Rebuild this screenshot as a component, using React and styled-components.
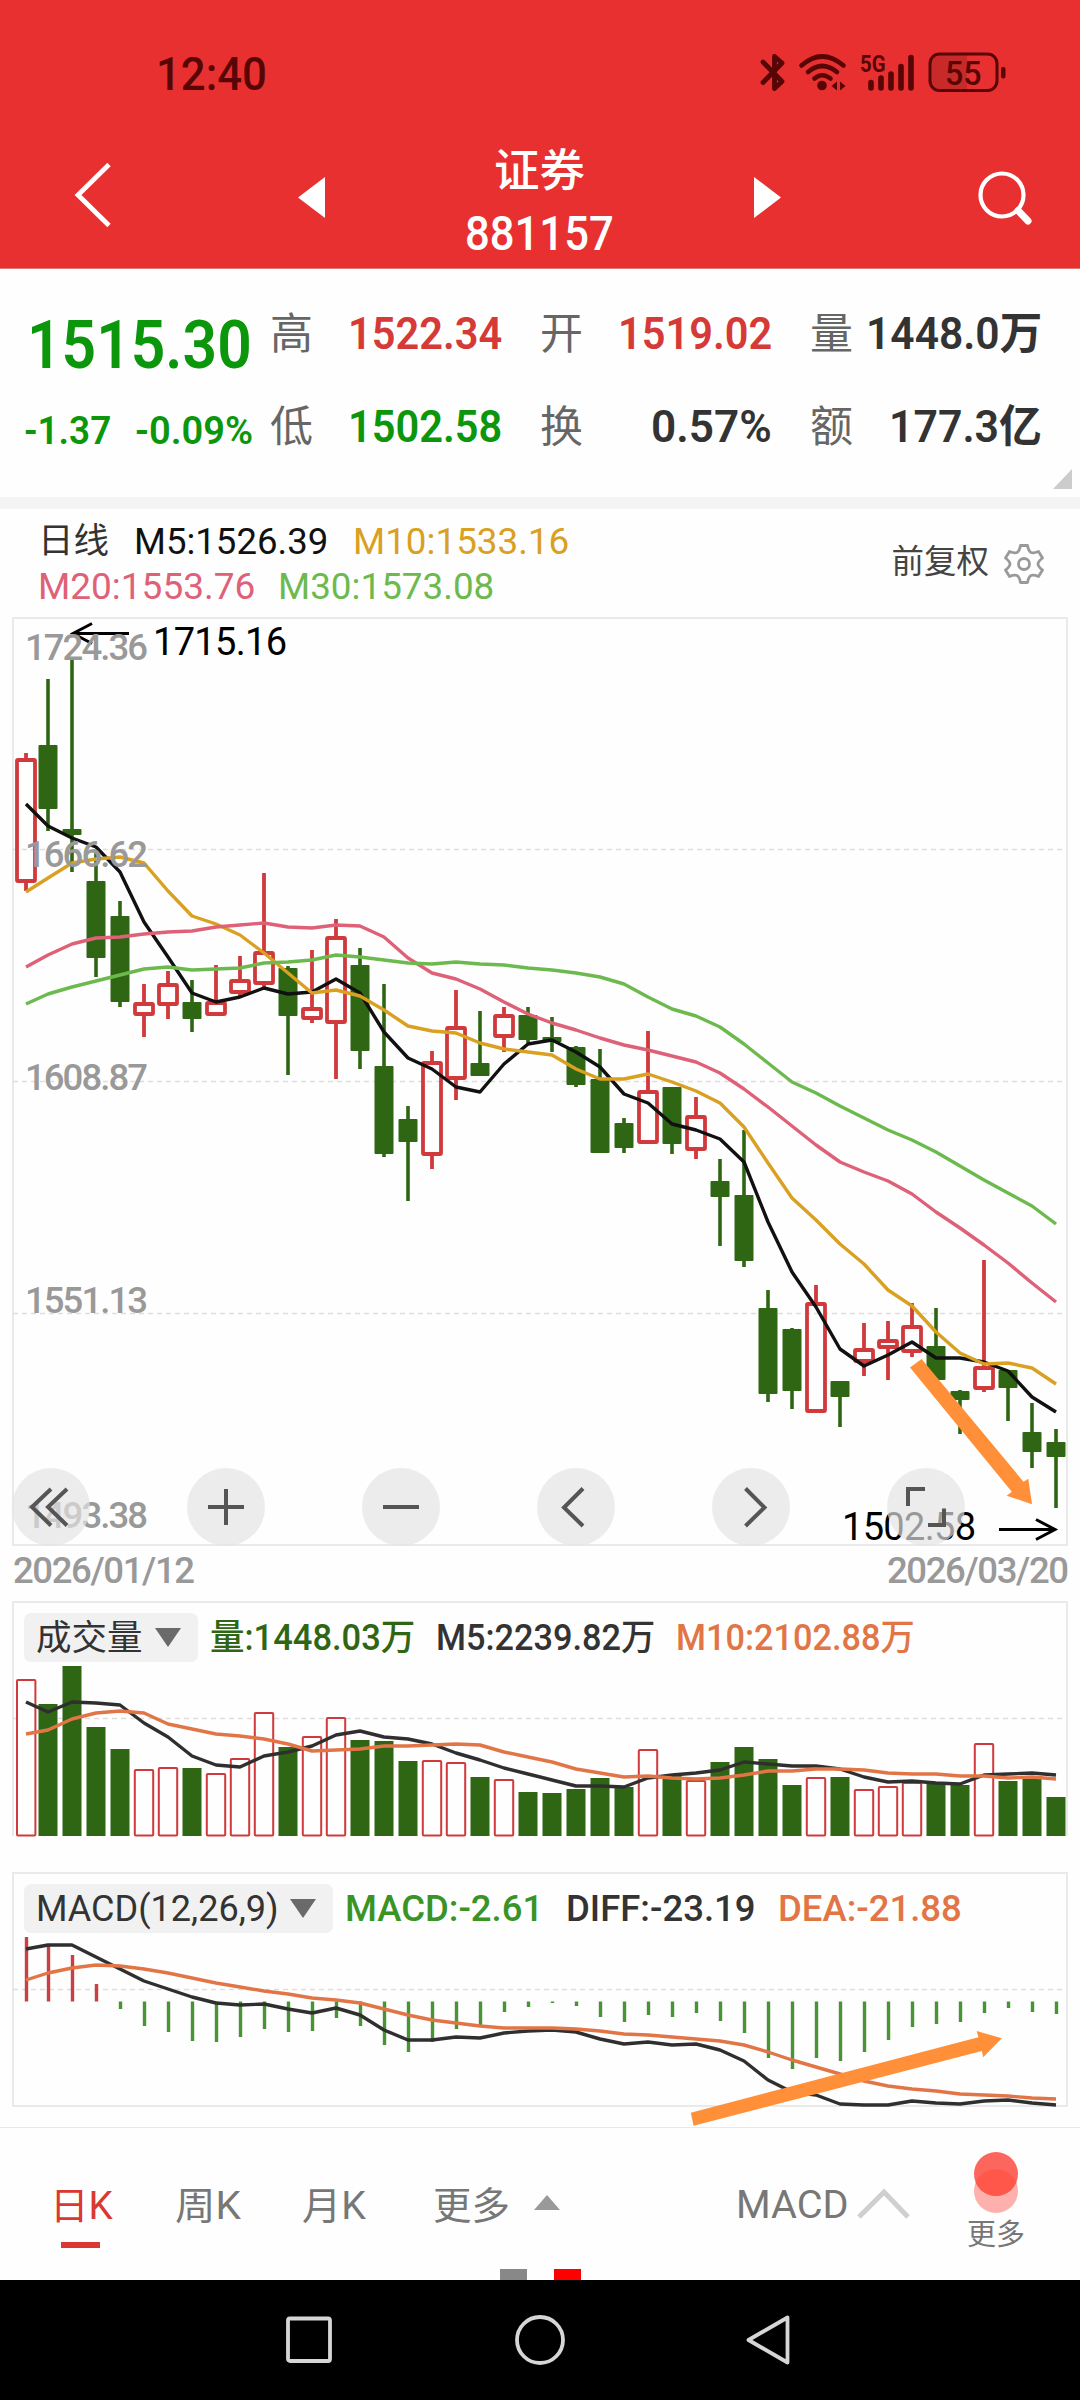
import React, { useLayoutEffect, useRef } from "react";
import styled, { createGlobalStyle, css } from "styled-components";

const FONT = `Roboto, "Noto Sans CJK SC", sans-serif`;

const GlobalStyle = createGlobalStyle`
  * { box-sizing: border-box; }
  body { margin: 0; background: #fefefe; font-family: ${FONT}; }
  svg { display: block; }
`;

/* ---------- text fitted to a column width ---------- */
const FitBox = styled.span`
  display: block;
  flex: none;
  width: ${(p) => p.$w}px;
  white-space: nowrap;
  font-size: ${(p) => p.$size}px;
  font-weight: ${(p) => p.$weight || 400};
  color: ${(p) => p.$color || "inherit"};
  margin-left: ${(p) => p.$gap || 0}px;
`;
const FitInner = styled.span`
  display: inline-block;
  transform-origin: 0 50%;
`;
function Fit({ w, size, weight, color, gap, children }) {
  const ref = useRef(null);
  useLayoutEffect(() => {
    const fit = () => {
      const el = ref.current;
      if (el) el.style.transform = `scaleX(${w / el.offsetWidth})`;
    };
    fit();
    document.fonts?.ready.then(fit);
  }, [w, children]);
  return (
    <FitBox $w={w} $size={size} $weight={weight} $color={color} $gap={gap}>
      <FitInner ref={ref}>{children}</FitInner>
    </FitBox>
  );
}

/* ---------- layout ---------- */
const Screen = styled.main`
  width: 1080px;
  height: 2400px;
  overflow: hidden;
  display: flex;
  flex-direction: column;
  background: #fefefe;
`;
const Header = styled.header`
  height: 269px;
  background: #e83030;
  border-bottom: 1px solid #e07a76;
`;
const StatusBar = styled.div`
  height: 141px;
  padding: 7px 60px 0 156px;
  display: flex;
  align-items: center;
  justify-content: space-between;
  color: #570505;
`;
const TitleBar = styled.div`
  height: 124px;
  display: grid;
  grid-template-columns: 298px 27px 429px 27px 1fr;
  align-items: center;
  color: #fff;
`;
const TitleText = styled.div`
  display: flex;
  flex-direction: column;
  align-items: center;
  line-height: 62px;
`;
const BackSlot = styled.div`
  padding: 0 0 16px 70px;
`;
const SearchSlot = styled.div`
  padding: 0 0 12px 195px;
`;
const StepSlot = styled.div`
  padding-bottom: 12px;
`;

const Quote = styled.section`
  height: 228px;
  display: flex;
  position: relative;
`;
const Price = styled.div`
  width: 270px;
  padding: 33px 0 0 24px;
  line-height: 86px;
  color: #0b960b;
`;
const PriceRow = styled.div`
  padding-left: 3px;
`;
const ChangeRow = styled.div`
  display: flex;
`;
const Stats = styled.div`
  display: grid;
  grid-template-columns: repeat(3, 232px);
  grid-auto-rows: 93px;
  column-gap: 38px;
  padding-top: 19px;
  line-height: 93px;
`;
const Stat = styled.div`
  display: flex;
  justify-content: space-between;
`;
const StatLabel = styled.span`
  font-size: 43px;
  color: #666;
`;
const Corner = styled.i`
  position: absolute;
  right: 8px;
  bottom: 8px;
  border-style: solid;
  border-width: 0 0 20px 19px;
  border-color: transparent transparent #ccc transparent;
`;
const Band = styled.div`
  height: 12px;
  background: #f4f4f4;
`;

const Legend = styled.section`
  height: 100px;
  padding: 10px 35px 0 38px;
  display: flex;
  justify-content: space-between;
`;
const LegendRow = styled.div`
  display: flex;
  line-height: 45px;
  height: 45px;
`;
const Adjust = styled.div`
  height: 90px;
  display: flex;
  align-items: center;
  gap: 14px;
  font-size: 32.5px;
  line-height: 40px;
  color: #444;
`;
const AdjustText = styled.span`
  padding-bottom: 4px;
`;

const ChartBox = styled.section`
  position: relative;
  height: ${(p) => p.$h}px;
`;
const Canvas = styled.svg`
  position: absolute;
  inset: 0;
  overflow: visible;
`;
const Controls = styled.div`
  position: absolute;
  left: 12px;
  top: 859px;
  display: flex;
  gap: 97px;
`;
const RoundButton = styled.button`
  width: 78px;
  height: 78px;
  padding: 0;
  border: 0;
  border-radius: 50%;
  background: rgba(227, 227, 227, 0.675);
`;
const IndicatorBar = styled.div`
  position: relative;
  display: flex;
  padding: ${(p) => p.$top}px 0 0 24px;
  line-height: 50px;
`;
const Pill = styled.div`
  width: ${(p) => p.$w}px;
  height: 49px;
  border-radius: 7px;
  background: #f1f1f1;
  color: #333;
  display: flex;
  align-items: center;
  padding-left: 12px;
  gap: 12px;
`;
const Caret = styled.i`
  border-style: solid;
  border-color: ${(p) => p.$color} transparent;
  border-width: ${(p) => (p.$up ? "0 13px 15px" : "19px 13.5px 0")};
  margin-left: ${(p) => p.$gap || 0}px;
`;

const TabBar = styled.nav`
  height: 153px;
  border-top: 1px solid #e9e9e9;
  display: flex;
  flex-direction: column;
`;
const TabRow = styled.div`
  height: 141px;
  display: flex;
  align-items: flex-start;
  color: #777;
  padding: 0 55px 0 50px;
`;
const Tab = styled.div`
  position: relative;
  display: flex;
  align-items: center;
  height: ${(p) => p.$h || 149}px;
  margin-right: ${(p) => p.$after || 0}px;
  font-size: 37.5px;
  ${(p) =>
    p.$active &&
    css`
      color: #da3832;
      &::after {
        content: "";
        position: absolute;
        left: 11px;
        top: 114px;
        width: 39px;
        height: 6px;
        background: currentColor;
      }
    `}
`;
const More = styled.div`
  margin-left: auto;
  display: flex;
  flex-direction: column;
  align-items: center;
  padding-top: 23px;
  font-size: 29px;
  line-height: 41px;
`;
const Dots = styled.div`
  display: flex;
  justify-content: center;
  gap: 27px;
  height: 11px;
`;
const Dot = styled.i`
  width: 27px;
  height: 11px;
  background: ${(p) => p.$c};
`;
const SystemNav = styled.footer`
  height: 120px;
  background: #000;
  display: flex;
  justify-content: center;
  gap: 177px;
  padding: 34px 0 0 0;
`;

/* ---------- data ---------- */
const X = (i) => (i === 0 ? 26 : 24 + i * 24);

// [type, high, body top, body bottom, low]
const CANDLES = [
  ["r", 753, 758, 883, 891], ["g", 679, 745, 809, 831], ["g", 659, 829, 835, 872], ["g", 852, 881, 958, 977],
  ["g", 901, 916, 1002, 1007], ["r", 984, 1002, 1016, 1037], ["r", 971, 983, 1006, 1019], ["g", 980, 1002, 1019, 1032],
  ["r", 965, 1001, 1016, 1016], ["r", 956, 979, 994, 997], ["r", 873, 951, 985, 988], ["g", 966, 968, 1016, 1075],
  ["r", 950, 1007, 1020, 1023], ["r", 919, 936, 1024, 1079], ["g", 948, 965, 1051, 1069], ["g", 984, 1066, 1154, 1157],
  ["g", 1106, 1119, 1142, 1201], ["r", 1051, 1061, 1156, 1169], ["r", 990, 1026, 1080, 1100], ["g", 1011, 1063, 1076, 1076],
  ["r", 1007, 1014, 1038, 1052], ["g", 1007, 1015, 1040, 1043], ["g", 1017, 1037, 1042, 1052], ["g", 1046, 1047, 1085, 1087],
  ["g", 1049, 1079, 1153, 1153], ["g", 1118, 1123, 1148, 1153], ["r", 1031, 1090, 1144, 1144], ["g", 1087, 1087, 1144, 1154],
  ["r", 1097, 1115, 1151, 1159], ["g", 1159, 1181, 1197, 1246], ["g", 1130, 1195, 1261, 1267], ["g", 1290, 1308, 1394, 1402],
  ["g", 1328, 1329, 1391, 1409], ["r", 1285, 1302, 1413, 1413], ["g", 1381, 1381, 1397, 1427], ["r", 1323, 1348, 1363, 1376],
  ["r", 1321, 1339, 1349, 1380], ["r", 1303, 1325, 1353, 1357], ["g", 1308, 1346, 1380, 1380], ["g", 1390, 1391, 1400, 1434],
  ["r", 1260, 1366, 1390, 1392], ["g", 1370, 1370, 1388, 1421], ["g", 1403, 1432, 1452, 1468], ["g", 1429, 1442, 1457, 1508],
];
const M5 = [804, 826, 838, 847, 872, 922, 957, 993, 1002, 997, 988, 994, 992, 979, 993, 1032, 1058, 1069, 1087, 1092, 1064, 1044, 1040, 1052, 1067, 1094, 1103, 1124, 1130, 1139, 1162, 1222, 1272, 1307, 1349, 1366, 1355, 1342, 1358, 1358, 1362, 1371, 1397, 1412];
const M10 = [892, 878, 863, 859, 857, 863, 891, 916, 924, 935, 953, 973, 993, 990, 996, 1010, 1026, 1031, 1033, 1043, 1049, 1052, 1055, 1069, 1079, 1079, 1074, 1082, 1091, 1103, 1127, 1163, 1198, 1220, 1244, 1264, 1290, 1306, 1332, 1353, 1364, 1363, 1368, 1384];
const M20 = [967, 955, 944, 938, 937, 934, 932, 931, 927, 925, 923, 927, 928, 925, 926, 937, 958, 973, 979, 989, 1002, 1014, 1023, 1030, 1038, 1045, 1050, 1056, 1062, 1073, 1089, 1107, 1126, 1145, 1162, 1172, 1181, 1194, 1212, 1228, 1245, 1263, 1283, 1302];
const M30 = [1004, 994, 987, 981, 975, 969, 967, 970, 969, 968, 963, 962, 960, 955, 957, 960, 963, 964, 962, 964, 965, 968, 970, 973, 977, 984, 997, 1009, 1016, 1027, 1044, 1063, 1082, 1093, 1106, 1118, 1130, 1140, 1152, 1166, 1180, 1193, 1206, 1224];

const VOLUME = [1679, 1704, 1666, 1727, 1749, 1769, 1767, 1768, 1773, 1758, 1712, 1747, 1736, 1717, 1740, 1741, 1761, 1760, 1762, 1777, 1779, 1792, 1793, 1789, 1778, 1787, 1749, 1775, 1780, 1762, 1747, 1759, 1785, 1777, 1777, 1789, 1786, 1782, 1783, 1785, 1743, 1781, 1777, 1797];
const VM5 = [1702, 1712, 1702, 1703, 1705, 1723, 1737, 1756, 1765, 1767, 1756, 1752, 1746, 1735, 1731, 1737, 1739, 1744, 1753, 1760, 1768, 1774, 1780, 1786, 1786, 1787, 1778, 1775, 1773, 1770, 1762, 1764, 1766, 1766, 1769, 1777, 1782, 1781, 1783, 1784, 1775, 1774, 1773, 1775];
const VM10 = [1734, 1730, 1719, 1713, 1711, 1713, 1724, 1729, 1734, 1736, 1739, 1744, 1751, 1750, 1749, 1746, 1746, 1745, 1744, 1745, 1752, 1757, 1762, 1769, 1773, 1777, 1776, 1778, 1779, 1778, 1775, 1771, 1771, 1769, 1769, 1770, 1773, 1774, 1774, 1776, 1776, 1778, 1777, 1779];

const MACD = [1937, 1945, 1955, 1984, 2009, 2026, 2032, 2041, 2042, 2037, 2029, 2032, 2031, 2018, 2026, 2045, 2052, 2042, 2029, 2025, 2012, 2007, 2003, 2006, 2017, 2022, 2015, 2017, 2013, 2021, 2033, 2058, 2069, 2058, 2061, 2052, 2040, 2027, 2024, 2022, 2013, 2008, 2012, 2014];
const DIFF = [1949, 1945, 1945, 1957, 1969, 1981, 1989, 1997, 2003, 2005, 2004, 2009, 2013, 2008, 2015, 2030, 2040, 2040, 2037, 2038, 2033, 2031, 2030, 2032, 2039, 2044, 2042, 2045, 2044, 2050, 2061, 2080, 2092, 2095, 2104, 2105, 2105, 2101, 2103, 2104, 2101, 2100, 2103, 2105];
const DEA = [1980, 1973, 1968, 1965, 1966, 1969, 1973, 1978, 1983, 1987, 1991, 1994, 1998, 2000, 2003, 2009, 2015, 2020, 2023, 2026, 2028, 2028, 2028, 2029, 2031, 2034, 2035, 2037, 2039, 2041, 2045, 2052, 2060, 2067, 2074, 2081, 2086, 2089, 2091, 2094, 2095, 2096, 2098, 2099];

const GREEN = "#2f6614";
const RED = "#d03a3c";
const ORANGE = "#e27546";

/* ---------- chart pieces ---------- */
const Line = ({ data, color, w = 3.4 }) => (
  <polyline points={data.map((y, i) => `${X(i)},${y}`).join(" ")} fill="none" stroke={color} strokeWidth={w} strokeLinejoin="round" />
);
const Grid = ({ y }) => <line x1="13" x2="1066" y1={y} y2={y} stroke="#dedede" strokeWidth="1.3" strokeDasharray="5 4" />;
const Label = ({ x, y, w, color = "#999", size = 36.5, weight = 500, children }) => (
  <text x={x} y={y} fill={color} fontFamily={FONT} fontSize={size} fontWeight={weight} textLength={w} lengthAdjust="spacing">
    {children}
  </text>
);

function CandleChart() {
  return (
    <Canvas width="1080" height="981" viewBox="0 609 1080 981">
      <rect x="13" y="618" width="1054" height="927" fill="none" stroke="#eaeaea" strokeWidth="2" />
      <Grid y={849.5} />
      <Grid y={1081.5} />
      <Grid y={1313.5} />
      {CANDLES.map(([t, h, a, b, l], i) => {
        const x = 24 + i * 24;
        return t === "g" ? (
          <g key={i} fill={GREEN}>
            <rect x={x - 1.8} y={h} width="3.6" height={l - h} />
            <rect x={x - 9.5} y={a} width="19" height={b - a} rx="1" />
          </g>
        ) : (
          <g key={i} stroke={RED} strokeWidth="3.8" fill="none">
            <path d={`M${i ? x : 26} ${h}V${a + 1}M${i ? x : 26} ${b - 1}V${l}`} />
            <rect x={i ? x - 9 : 17} y={a + 2} width="18" height={b - a - 4} rx="1" />
          </g>
        );
      })}
      <Line data={M5} color="#111" />
      <Line data={M10} color="#d9a022" />
      <Line data={M20} color="#de6178" />
      <Line data={M30} color="#6cba4e" />
      <path d="M129 633.5H73M92 623.5L73 633.5L92 643.5" fill="none" stroke="#000" strokeWidth="3" />
      <Label x={25} y={660} w={123}>1724.36</Label>
      <Label x={25} y={867} w={123}>1666.62</Label>
      <Label x={25} y={1090} w={123}>1608.87</Label>
      <Label x={25} y={1313} w={123}>1551.13</Label>
      <Label x={25} y={1528} w={123}>1493.38</Label>
      <Label x={153} y={655} w={134} size={38} weight={400} color="#000">1715.16</Label>
      <Label x={842} y={1540} w={134} size={38} weight={400} color="#000">1502.58</Label>
      <path d="M999 1529.5H1055M1036 1519.5L1055 1529.5L1036 1539.5" fill="none" stroke="#000" strokeWidth="3" />
      <Label x={13} y={1583} w={182}>2026/01/12</Label>
      <Label x={887} y={1583} w={182}>2026/03/20</Label>
      <path d="M910 1367.5L921.6 1359L1023.5 1481.7L1028.3 1478.7L1032 1504.3L1006.7 1495.7L1011.8 1491.7Z" fill="#ff8f38" />
    </Canvas>
  );
}

function VolumeChart() {
  return (
    <Canvas width="1080" height="272" viewBox="0 1590 1080 272">
      <path d="M13 1836V1602H1067V1836" fill="none" stroke="#eaeaea" strokeWidth="2" />
      <Grid y={1718.5} />
      {VOLUME.map((y, i) => {
        const x = 24 + i * 24;
        return CANDLES[i][0] === "g" ? (
          <rect key={i} x={x - 9.5} y={y} width="19" height={1836 - y} fill={GREEN} />
        ) : (
          <rect key={i} x={i ? x - 9.2 : 17} y={y + 1} width="18.4" height={1834.5 - y} rx="1" fill="#fefefe" stroke={RED} strokeWidth="2" />
        );
      })}
      <Line data={VM5} color="#2f2f2f" />
      <Line data={VM10} color={ORANGE} />
    </Canvas>
  );
}

function MacdChart() {
  return (
    <Canvas width="1080" height="265" viewBox="0 1862 1080 265">
      <rect x="13" y="1873" width="1054" height="233" fill="none" stroke="#eaeaea" strokeWidth="2" />
      <Grid y={1993 - 3.5} />
      {MACD.map((y, i) => (
        <line key={i} x1={X(i) + 0.5} x2={X(i) + 0.5} y1="2001.5" y2={y} stroke={i < 4 ? "#c94044" : "#489434"} strokeWidth="3.4" />
      ))}
      <Line data={DIFF} color="#2f2f2f" />
      <Line data={DEA} color={ORANGE} />
      <path d="M690.8 2112.7L978.4 2037.3L976.7 2031L1001.8 2038.3L983.2 2057.3L981.9 2051L693.6 2125.7Z" fill="#ff8f38" />
    </Canvas>
  );
}

/* ---------- icons ---------- */
const StatusIcons = () => (
  <svg width="270" height="70" viewBox="750 39.5 270 70" fill="none" stroke="#570505" strokeLinecap="round" strokeLinejoin="round">
    <path d="M763 62.5L782 82L774.5 89V57L782 63.5L763 83" strokeWidth="4.8" />
    <path d="M801.5 66Q822 48 843.5 66" strokeWidth="4.6" />
    <path d="M808 72.5Q822 60.5 837 72.5" strokeWidth="4.6" />
    <path d="M814.5 79Q822 72.5 830.5 79" strokeWidth="4.6" />
    <circle cx="822" cy="86" r="4.8" fill="#570505" stroke="none" />
    <path d="M837 82V91L831.5 86.5ZM840 82V91L845.5 86.5Z" fill="#570505" stroke="none" />
    <text x="860" y="72.5" fontFamily={FONT} fontSize="24" fontWeight="700" fill="#570505" stroke="none" textLength="25.5" lengthAdjust="spacingAndGlyphs">5G</text>
    <path d="M871 83V88.5M881 78.5V88.5M891 74.5V88.5M901 67V88.5M911 58V88.5" strokeWidth="5.6" />
    <path d="M940 54.5H967V91H940Q930 91 930 81V64.5Q930 54.5 940 54.5Z" fill="#c82a2a" stroke="none" />
    <rect x="930" y="54.5" width="67" height="36.5" rx="9.5" strokeWidth="3" />
    <rect x="1001" y="67.5" width="4.5" height="11.5" rx="2" fill="#570505" stroke="none" />
    <text x="945" y="85" fontFamily={FONT} fontSize="33" fontWeight="500" fill="#570505" stroke="none" textLength="36.5" lengthAdjust="spacingAndGlyphs">55</text>
  </svg>
);
const BackIcon = () => (
  <svg width="44" height="70" viewBox="0 0 44 70" fill="none" stroke="#fff" strokeWidth="4.8">
    <path d="M39 4.5L8 35L39 65.5" />
  </svg>
);
const SearchIcon = () => (
  <svg width="60" height="60" viewBox="0 0 60 60" fill="none" stroke="#fff">
    <circle cx="26" cy="28" r="21.5" strokeWidth="4.2" />
    <path d="M42 43.5L52 54" strokeWidth="7" strokeLinecap="round" />
  </svg>
);
const Triangle = ({ d }) => (
  <svg width="27" height="41" viewBox="0 0 27 41" fill="#fff">
    <path d={d} />
  </svg>
);
const GearIcon = () => (
  <svg width="42" height="42" viewBox="0 0 42 42" fill="none" stroke="#999" strokeWidth="2.8" strokeLinejoin="round">
    <path d="M17.5 2.5H24.5Q25.5 8 28 9.5Q30.5 10.5 35.5 8.5L39.5 15Q35 18.5 35 21Q35 23.5 39.5 27L35.5 33.5Q30.5 31.5 28 32.5Q25.5 34 24.5 39.5H17.5Q16.5 34 14 32.5Q11.5 31.5 6.5 33.5L2.5 27Q7 23.5 7 21Q7 18.5 2.5 15L6.5 8.5Q11.5 10.5 14 9.5Q16.5 8 17.5 2.5Z" />
    <circle cx="21" cy="21" r="5.5" />
  </svg>
);
const CONTROL_PATHS = [
  "M0 -18L-19 0L0 18.5M16 -18L-3 0L16 18.5",
  "M-18 0H18M0 -18V18",
  "M-18 0H18",
  "M7 -18.5L-12 0.5L7 19",
  "M-5.5 -18.5L13.5 0.5L-5.5 19",
  "M-1 -18H-18V-1M18 1.5V18H2",
];
const ControlIcon = ({ d }) => (
  <svg width="78" height="78" viewBox="-39 -39 78 78" fill="none" stroke="#555" strokeWidth="4">
    <path d={d} />
  </svg>
);
const MoreIcon = () => (
  <svg width="46" height="64" viewBox="0 0 46 64">
    <circle cx="23" cy="40" r="22" fill="#fdb0ac" />
    <circle cx="23" cy="23" r="22" fill="#fd665c" />
    <path d="M2.8 31.5A22 22 0 0 1 43.2 31.5A22 22 0 0 1 23 45A22 22 0 0 1 2.8 31.5Z" fill="#ff574a" />
  </svg>
);

const STATS = [
  ["高", "1522.34", 154, "#d63a37"],
  ["开", "1519.02", 154, "#d63a37"],
  ["量", "1448.0万", 176, "#333"],
  ["低", "1502.58", 154, "#0b960b"],
  ["换", "0.57%", 121, "#333"],
  ["额", "177.3亿", 153, "#333"],
];

export default function App() {
  return (
    <Screen>
      <GlobalStyle />
      <Header>
        <StatusBar>
          <Fit w={111} size={46.5} weight={500}>12:40</Fit>
          <StatusIcons />
        </StatusBar>
        <TitleBar>
          <BackSlot><BackIcon /></BackSlot>
          <StepSlot><Triangle d="M27 0V41L0 20.5Z" /></StepSlot>
          <TitleText>
            <Fit w={91} size={45.5} weight={500}>证券</Fit>
            <Fit w={149} size={48} weight={500}>881157</Fit>
          </TitleText>
          <StepSlot><Triangle d="M0 0V41L27 20.5Z" /></StepSlot>
          <SearchSlot><SearchIcon /></SearchSlot>
        </TitleBar>
      </Header>

      <Quote>
        <Price>
          <PriceRow><Fit w={225} size={67} weight={600}>1515.30</Fit></PriceRow>
          <ChangeRow>
            <Fit w={87} size={39} weight={600}>-1.37</Fit>
            <Fit w={118} size={39} weight={600} gap={24}>-0.09%</Fit>
          </ChangeRow>
        </Price>
        <Stats>
          {STATS.map(([label, value, w, color]) => (
            <Stat key={label}>
              <StatLabel>{label}</StatLabel>
              <Fit w={w} size={44.5} weight={600} color={color}>{value}</Fit>
            </Stat>
          ))}
        </Stats>
        <Corner />
      </Quote>
      <Band />

      <Legend>
        <div>
          <LegendRow>
            <Fit w={71} size={35} color="#333">日线</Fit>
            <Fit w={194} size={37.5} color="#111" gap={25}>M5:1526.39</Fit>
            <Fit w={216} size={37.5} color="#d9a022" gap={25}>M10:1533.16</Fit>
          </LegendRow>
          <LegendRow>
            <Fit w={217} size={37.5} color="#de6178">M20:1553.76</Fit>
            <Fit w={216} size={37.5} color="#6cba4e" gap={23}>M30:1573.08</Fit>
          </LegendRow>
        </div>
        <Adjust>
          <AdjustText>前复权</AdjustText>
          <GearIcon />
        </Adjust>
      </Legend>

      <ChartBox $h={981}>
        <CandleChart />
        <Controls>
          {CONTROL_PATHS.map((d) => (
            <RoundButton key={d}><ControlIcon d={d} /></RoundButton>
          ))}
        </Controls>
      </ChartBox>

      <ChartBox $h={272}>
        <VolumeChart />
        <IndicatorBar $top={23}>
          <Pill $w={174}>
            <Fit w={107} size={35.5}>成交量</Fit>
            <Caret $color="#6a6a6a" />
          </Pill>
          <Fit w={205} size={36} weight={500} color={GREEN} gap={12}>量:1448.03万</Fit>
          <Fit w={219} size={36} weight={500} color="#333" gap={21}>M5:2239.82万</Fit>
          <Fit w={239} size={36} weight={500} color={ORANGE} gap={21}>M10:2102.88万</Fit>
        </IndicatorBar>
      </ChartBox>

      <ChartBox $h={265}>
        <MacdChart />
        <IndicatorBar $top={22}>
          <Pill $w={309}>
            <Fit w={243} size={36.5}>MACD(12,26,9)</Fit>
            <Caret $color="#6a6a6a" $gap={-1} />
          </Pill>
          <Fit w={198} size={36.5} weight={500} color="#3a9425" gap={12}>MACD:-2.61</Fit>
          <Fit w={190} size={36.5} weight={500} color="#333" gap={23}>DIFF:-23.19</Fit>
          <Fit w={184} size={36.5} weight={500} color={ORANGE} gap={22}>DEA:-21.88</Fit>
        </IndicatorBar>
      </ChartBox>

      <TabBar>
        <TabRow>
          <Tab $active $after={62}><Fit w={63} size={38}>日K</Fit></Tab>
          <Tab $after={61}><Fit w={66} size={38}>周K</Fit></Tab>
          <Tab $after={67}><Fit w={64} size={38}>月K</Fit></Tab>
          <Tab $after={176}>
            <Fit w={77} size={38}>更多</Fit>
            <Caret $up $color="#999" $gap={24} />
          </Tab>
          <Tab $h={154}>
            <Fit w={113} size={39}>MACD</Fit>
            <svg width="62" height="36" viewBox="0 0 62 36" fill="none" stroke="#cfcfcf" strokeWidth="5">
              <path d="M10 30L35 5L59 30" />
            </svg>
          </Tab>
          <More>
            <MoreIcon />
            <span>更多</span>
          </More>
        </TabRow>
        <Dots>
          <Dot $c="#888" />
          <Dot $c="#ff0000" />
        </Dots>
      </TabBar>

      <SystemNav>
        <svg width="52" height="52" viewBox="0 0 52 52" fill="none" stroke="#d6d6d6" strokeWidth="3.8">
          <rect x="3" y="4.5" width="42" height="42.5" rx="2" />
        </svg>
        <svg width="52" height="52" viewBox="0 0 52 52" fill="none" stroke="#d6d6d6" strokeWidth="3.8">
          <circle cx="26" cy="26" r="23" />
        </svg>
        <svg width="52" height="52" viewBox="0 0 52 52" fill="none" stroke="#d6d6d6" strokeWidth="3.8" strokeLinejoin="round">
          <path d="M44.5 3.5V48.5L5.5 26Z" />
        </svg>
      </SystemNav>
    </Screen>
  );
}
